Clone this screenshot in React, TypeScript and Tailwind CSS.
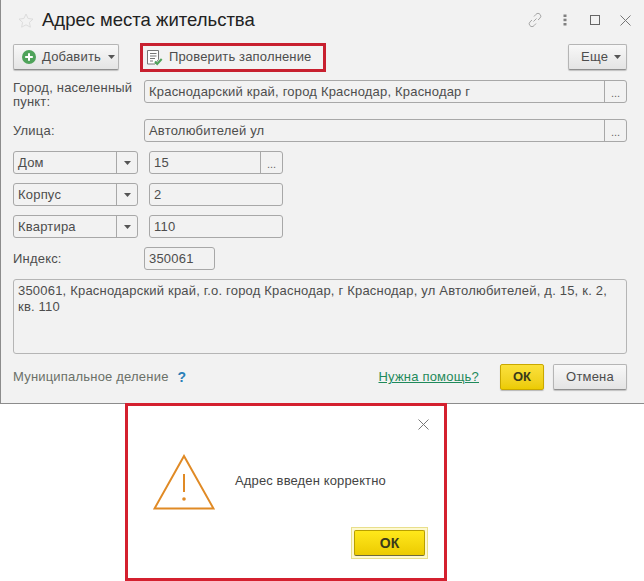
import React from 'react';

const Dots = () => (
  <div className="w-[22px] h-full border-l border-[#a8a8a8] flex items-end justify-center pb-[3px] text-[11px] leading-none text-[#666] shrink-0">...</div>
);

const Caret = ({ color = '#555' }: { color?: string }) => (
  <svg width="7" height="4" viewBox="0 0 7 4" className="shrink-0"><path d="M0 0h7L3.5 4z" fill={color} /></svg>
);

const Field = ({ value, dots, className }: { value: string; dots?: boolean; className: string }) => (
  <div className={`h-[23px] flex items-stretch rounded-[3px] border border-[#a8a8a8] bg-[#f2f2f2] ${className}`}>
    <div className="flex-1 pl-[4px] text-[13px] leading-[21px] tracking-[0.2px] text-[#4d4d4d] truncate">{value}</div>
    {dots && <Dots />}
  </div>
);

const PartRow = ({ name, value, dots }: { name: string; value: string; dots?: boolean }) => (
  <div className="flex mt-[9px] h-[23px]">
    <div className="w-[125px] flex rounded-[3px] border border-[#a8a8a8]">
      <div className="flex-1 pl-[4px] text-[13px] leading-[21px] tracking-[0.2px] text-[#4d4d4d]">{name}</div>
      <div className="w-[21px] border-l border-[#a8a8a8] flex items-center justify-center"><Caret /></div>
    </div>
    <Field value={value} dots={dots} className="w-[134px] ml-[11px]" />
  </div>
);

const Button = ({ children, className }: { children: React.ReactNode; className: string }) => (
  <div className={`h-[26px] flex items-center rounded-[2px] border border-[#b5b5b5] border-b-[#8f8f8f] bg-gradient-to-b from-[#f8f8f8] to-[#e4e4e4] shadow-[0_1px_1px_rgba(0,0,0,0.2)] ${className}`}>
    {children}
  </div>
);

export default function App() {
  return (
    <div className="w-[644px] h-[581px] bg-white overflow-hidden font-['Liberation_Sans',Arial,sans-serif]">
      <div className="h-[404px] bg-[#f2f2f2] border-l border-b border-[#8c8c8c] pl-[12px] pr-[17px] flex flex-col">
        {/* header */}
        <div className="h-[44px] flex items-start shrink-0">
          <svg width="16" height="15" viewBox="0 0 16 15" className="ml-[5px] mt-[13px]" fill="none" stroke="#dcdcdc" strokeWidth="1">
            <path d="M8 1l2.1 4.5 4.9.6-3.6 3.3 1 4.8L8 11.8l-4.4 2.4 1-4.8L1 6.1l4.9-.6z" />
          </svg>
          <div className="ml-[8px] mt-[7px] text-[18.5px] leading-[26px] text-[#222]">Адрес места жительства</div>
          <div className="ml-auto flex items-center mt-[12px] mr-[-4px]">
            <svg width="16" height="16" viewBox="0 0 16 16" fill="none" stroke="#a6a6a6" strokeWidth="1">
              <path d="M6.5 9.5l3-3M7 4.5l2-2.2a2.6 2.6 0 0 1 4 0 2.7 2.7 0 0 1 0 3.8L11 8M9 11.5l-2 2.2a2.6 2.6 0 0 1-4 0 2.7 2.7 0 0 1 0-3.8L5 8" />
            </svg>
            <svg width="4" height="12" viewBox="0 0 4 12" className="ml-[20px]" fill="#808080">
              <rect x="0.5" y="0.5" width="3" height="2.5" /><rect x="0.5" y="4.7" width="3" height="2.5" /><rect x="0.5" y="9" width="3" height="2.5" />
            </svg>
            <div className="ml-[23px] w-[10px] h-[10px] border border-[#666]" />
            <svg width="11" height="11" viewBox="0 0 11 11" className="ml-[20px]" fill="none" stroke="#777" strokeWidth="1">
              <path d="M.5.5l10 10M10.5.5l-10 10" />
            </svg>
          </div>
        </div>

        {/* toolbar */}
        <div className="h-[26px] flex items-center shrink-0">
          <Button className="w-[106px] pl-[8px]">
            <svg width="14" height="14" viewBox="0 0 14 14">
              <circle cx="7" cy="7" r="7" fill="#4fa35a" />
              <path d="M7 3.2v7.6M3.2 7h7.6" stroke="#fff" strokeWidth="2" />
            </svg>
            <span className="ml-[6px] text-[13px] tracking-[0.2px] text-[#4d4d4d]">Добавить</span>
            <span className="ml-[7px]"><Caret /></span>
          </Button>
          <div className="ml-[21px] w-[186px] h-[29px] border-[3px] border-[#c8202f] flex items-center pl-[3px]">
            <svg width="17" height="17" viewBox="0 0 17 17" fill="none">
              <path d="M1.5 1.5h11v9l-3.5 4.5h-7.5z" fill="#fff" stroke="#777" />
              <path d="M4 4.5h6.5M4 7h6.5M4 9.5h5M4 12h3" stroke="#777" />
              <path d="M9 12.5l2.2 2.5 4.5-5" stroke="#4fa35a" strokeWidth="2" />
            </svg>
            <span className="ml-[6px] text-[13px] tracking-[0.15px] text-[#4d4d4d]">Проверить заполнение</span>
          </div>
          <Button className="ml-auto w-[59px] pl-[12px]">
            <span className="text-[13px] tracking-[0.25px] text-[#4d4d4d]">Еще</span>
            <span className="ml-[6px]"><Caret /></span>
          </Button>
        </div>

        {/* address fields */}
        <div className="flex mt-[10px] h-[23px]">
          <div className="w-[131px] text-[13px] leading-[14px] tracking-[0.2px] text-[#4d4d4d] pt-[1px] shrink-0">Город, населенный<br />пункт:</div>
          <Field value="Краснодарский край, город Краснодар, Краснодар г" dots className="flex-1" />
        </div>
        <div className="flex mt-[16px] h-[23px]">
          <div className="w-[131px] text-[13px] leading-[23px] tracking-[0.2px] text-[#4d4d4d] shrink-0">Улица:</div>
          <Field value="Автолюбителей ул" dots className="flex-1" />
        </div>
        <PartRow name="Дом" value="15" dots />
        <PartRow name="Корпус" value="2" />
        <PartRow name="Квартира" value="110" />
        <div className="flex mt-[9px] h-[23px]">
          <div className="w-[131px] text-[13px] leading-[23px] tracking-[0.2px] text-[#4d4d4d] shrink-0">Индекс:</div>
          <Field value="350061" className="w-[71px]" />
        </div>
        <div className="mt-[9px] h-[75px] rounded-[3px] border border-[#b5b5b5] px-[4px] pt-[3px] text-[13px] leading-[16px] tracking-[0.2px] text-[#4d4d4d]">
          350061, Краснодарский край, г.о. город Краснодар, г Краснодар, ул Автолюбителей, д. 15, к. 2, кв. 110
        </div>

        {/* footer */}
        <div className="flex items-center mt-[10px] h-[26px]">
          <span className="text-[13px] tracking-[0.2px] text-[#6b7068]">Муниципальное деление</span>
          <span className="ml-[9px] text-[14px] font-semibold text-[#2a7fb8]">?</span>
          <span className="ml-auto text-[13px] tracking-[0.2px] text-[#1f8a5b] underline">Нужна помощь?</span>
          <div className="ml-[21px] w-[44px] h-[26px] flex items-center justify-center rounded-[2px] border border-[#c9a800] bg-gradient-to-b from-[#fbe13a] to-[#eccb00] shadow-[0_1px_1px_rgba(0,0,0,0.25)] text-[13px] font-bold text-[#3a3a1a]">ОК</div>
          <Button className="ml-[9px] w-[74px] justify-center">
            <span className="text-[13px] tracking-[0.2px] text-[#4d4d4d]">Отмена</span>
          </Button>
        </div>
      </div>

      {/* message box */}
      <div className="-mt-px ml-[125px] w-[322px] h-[178px] border-[3px] border-[#d4202f] flex flex-col">
        <div className="flex justify-end pt-[13px] pr-[15px] shrink-0">
          <svg width="11" height="11" viewBox="0 0 11 11" fill="none" stroke="#777" strokeWidth="1">
            <path d="M.5.5l10 10M10.5.5l-10 10" />
          </svg>
        </div>
        <div className="flex items-center mt-[24px] ml-[25px]">
          <svg width="62" height="57" viewBox="0 0 62 57" fill="none" stroke="#e08a25">
            <path d="M31 2L1.5 54.5h59z" strokeWidth="2" />
            <path d="M31 20v18" strokeWidth="2" />
            <circle cx="31" cy="45" r="1.8" fill="#e08a25" stroke="none" />
          </svg>
          <span className="ml-[20px] mb-[4px] text-[13px] tracking-[0.13px] text-[#444]">Адрес введен корректно</span>
        </div>
        <div className="flex justify-end mt-[16px] mr-[16px]">
          <div className="w-[77px] h-[32px] border border-[#e8df8c] bg-[#fdf8d0] p-[2px]">
            <div className="h-full flex items-center justify-center rounded-[2px] border border-[#b89f00] border-b-[#6f6a3a] bg-gradient-to-b from-[#ffe81a] to-[#eccb00] text-[14px] font-bold text-[#3a3a1a]">ОК</div>
          </div>
        </div>
      </div>
    </div>
  );
}
